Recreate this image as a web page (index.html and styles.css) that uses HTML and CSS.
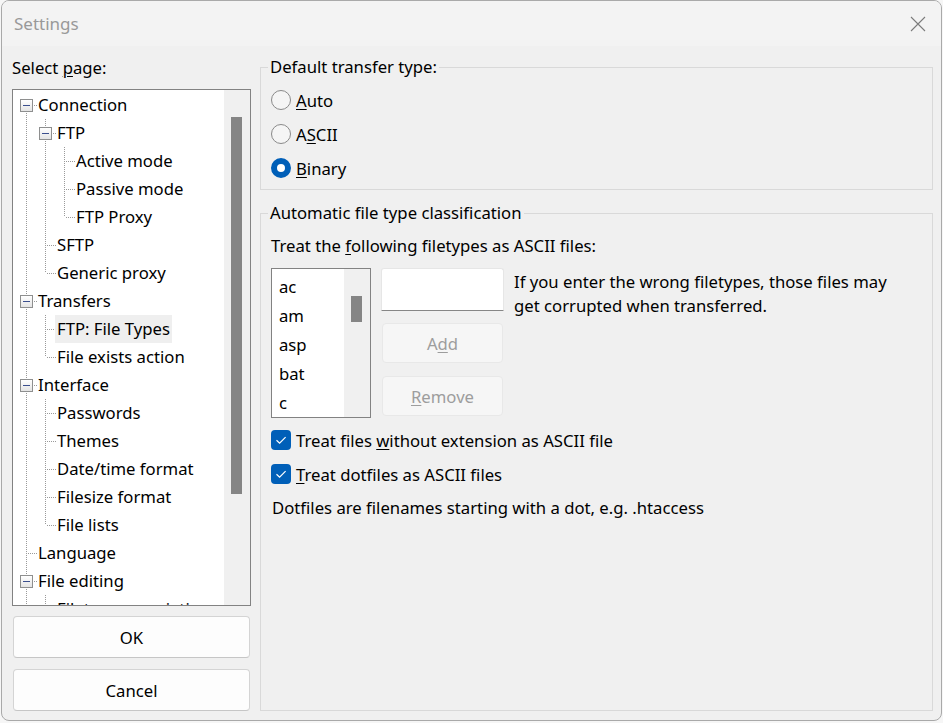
FILE: index.html
```html
<!DOCTYPE html>
<html lang="en">
<head>
<meta charset="utf-8">
<title>Settings</title>
<link rel="stylesheet" href="styles.css">
</head>
<body>
<div class="window">
  <div class="titlebar">
    <span class="title">Settings</span>
    <svg class="close" width="16" height="16" viewBox="0 0 16 16"><path d="M1 1 L15 15 M15 1 L1 15" stroke="#7c7c7c" stroke-width="1.1" fill="none"/></svg>
  </div>
  <div class="content">
    <div class="left">
      <div class="label">Select <u>p</u>age:</div>
      <div class="tree">
        <div class="tree-items">
          <div class="row"><span class="cell box-first"><span class="box"></span></span><span class="text">Connection</span></div>
          <div class="row"><span class="cell pipe"></span><span class="cell box-mid"><span class="box"></span></span><span class="text">FTP</span></div>
          <div class="row"><span class="cell pipe"></span><span class="cell pipe"></span><span class="cell tee"></span><span class="text">Active mode</span></div>
          <div class="row"><span class="cell pipe"></span><span class="cell pipe"></span><span class="cell tee"></span><span class="text">Passive mode</span></div>
          <div class="row"><span class="cell pipe"></span><span class="cell pipe"></span><span class="cell ell"></span><span class="text">FTP Proxy</span></div>
          <div class="row"><span class="cell pipe"></span><span class="cell tee"></span><span class="text">SFTP</span></div>
          <div class="row"><span class="cell pipe"></span><span class="cell ell"></span><span class="text">Generic proxy</span></div>
          <div class="row"><span class="cell box-mid"><span class="box"></span></span><span class="text">Transfers</span></div>
          <div class="row"><span class="cell pipe"></span><span class="cell tee"></span><span class="text selected">FTP: File Types</span></div>
          <div class="row"><span class="cell pipe"></span><span class="cell ell"></span><span class="text">File exists action</span></div>
          <div class="row"><span class="cell box-mid"><span class="box"></span></span><span class="text">Interface</span></div>
          <div class="row"><span class="cell pipe"></span><span class="cell tee"></span><span class="text">Passwords</span></div>
          <div class="row"><span class="cell pipe"></span><span class="cell tee"></span><span class="text">Themes</span></div>
          <div class="row"><span class="cell pipe"></span><span class="cell tee"></span><span class="text">Date/time format</span></div>
          <div class="row"><span class="cell pipe"></span><span class="cell tee"></span><span class="text">Filesize format</span></div>
          <div class="row"><span class="cell pipe"></span><span class="cell ell"></span><span class="text">File lists</span></div>
          <div class="row"><span class="cell tee"></span><span class="text">Language</span></div>
          <div class="row"><span class="cell box-mid"><span class="box"></span></span><span class="text">File editing</span></div>
          <div class="row"><span class="cell pipe"></span><span class="cell tee"></span><span class="text">Filetype associations</span></div>
        </div>
        <div class="vscroll tree-scroll"><div class="thumb"></div></div>
      </div>
      <button class="btn main-btn">OK</button>
      <button class="btn main-btn cancel">Cancel</button>
    </div>

    <div class="right">
      <fieldset class="group g1">
        <legend>Default transfer type:</legend>
        <div class="opt-row"><span class="radio"></span><span><u>A</u>uto</span></div>
        <div class="opt-row"><span class="radio"></span><span>A<u>S</u>CII</span></div>
        <div class="opt-row"><span class="radio checked"></span><span><u>B</u>inary</span></div>
      </fieldset>
      <fieldset class="group g2">
        <legend>Automatic file type classification</legend>
        <div class="line">Treat the <u>f</u>ollowing filetypes as ASCII files:</div>
        <div class="types">
          <div class="listbox">
            <div class="list-items">
              <div class="item">ac</div>
              <div class="item">am</div>
              <div class="item">asp</div>
              <div class="item">bat</div>
              <div class="item">c</div>
            </div>
            <div class="vscroll list-scroll"><div class="thumb"></div></div>
          </div>
          <div class="editcol">
            <div class="input"></div>
            <button class="btn disabled add">A<u>d</u>d</button>
            <button class="btn disabled remove"><u>R</u>emove</button>
          </div>
          <div class="help">If you enter the wrong filetypes, those files may<br>get corrupted when transferred.</div>
        </div>
        <div class="opt-row check-first"><span class="check"><svg width="20" height="20" viewBox="0 0 20 20"><path d="M5.5 10.2 L8.6 13.2 L14.6 7.2" stroke="#fff" stroke-width="1.2" fill="none"/></svg></span><span>Treat files <u>w</u>ithout extension as ASCII file</span></div>
        <div class="opt-row"><span class="check"><svg width="20" height="20" viewBox="0 0 20 20"><path d="M5.5 10.2 L8.6 13.2 L14.6 7.2" stroke="#fff" stroke-width="1.2" fill="none"/></svg></span><span><u>T</u>reat dotfiles as ASCII files</span></div>
        <div class="note">Dotfiles are filenames starting with a dot, e.g. .htaccess</div>
      </fieldset>
    </div>
  </div>
</div>
</body>
</html>
```

FILE: styles.css
```css
html, body {
  margin: 0;
  padding: 0;
  background: #f6f6f6;
}
body {
  font-family: "Noto Sans", "Open Sans", sans-serif;
  font-size: 16.7px;
  color: #000;
}
u {
  text-decoration: underline;
  text-underline-offset: 2px;
  text-decoration-thickness: 1px;
}
.window {
  width: 939px;
  height: 719px;
  margin-left: 1px;
  border: 1px solid #a9a9a9;
  border-radius: 8px;
  background: #f0f0f0;
  display: flex;
  flex-direction: column;
  overflow: hidden;
}
.titlebar {
  height: 45px;
  flex: none;
  background: #f3f3f3;
  display: flex;
  align-items: center;
  justify-content: space-between;
  padding: 0 15px 0 12px;
}
.title {
  color: #999;
  font-size: 17px;
}
.close { display: block; }

.content {
  flex: 1;
  display: grid;
  grid-template-columns: 239px 673px;
  column-gap: 9px;
  padding: 12px 0 9px 10px;
  min-height: 0;
}
.left {
  display: flex;
  flex-direction: column;
  min-height: 0;
}
.label {
  line-height: 20px;
  height: 20px;
}
.tree {
  margin-top: 11px;
  height: 517px;
  box-sizing: border-box;
  border: 1px solid #828282;
  background: #fff;
  display: flex;
  overflow: hidden;
}
.tree-items {
  flex: 1;
  padding: 1px 0 0 7px;
  overflow: hidden;
}
.row {
  display: flex;
  height: 28px;
  align-items: stretch;
  white-space: nowrap;
}
.cell {
  --dot: #9a9a9a;
  width: 19px;
  flex: none;
  display: flex;
  align-items: flex-start;
}
.pipe {
  background: repeating-linear-gradient(to bottom, var(--dot) 0 1px, transparent 1px 2px) 6px 0 / 1px 100% no-repeat;
}
.tee {
  background:
    repeating-linear-gradient(to bottom, var(--dot) 0 1px, transparent 1px 2px) 6px 0 / 1px 100% no-repeat,
    repeating-linear-gradient(to right, var(--dot) 0 1px, transparent 1px 2px) 8px 14px / 10px 1px no-repeat;
}
.ell {
  background:
    repeating-linear-gradient(to bottom, var(--dot) 0 1px, transparent 1px 2px) 6px 0 / 1px 14px no-repeat,
    repeating-linear-gradient(to right, var(--dot) 0 1px, transparent 1px 2px) 8px 14px / 10px 1px no-repeat;
}
.box-first {
  background:
    repeating-linear-gradient(to bottom, var(--dot) 0 1px, transparent 1px 2px) 6px 20px / 1px 8px no-repeat,
    repeating-linear-gradient(to right, var(--dot) 0 1px, transparent 1px 2px) 14px 14px / 4px 1px no-repeat;
}
.box-mid {
  background:
    repeating-linear-gradient(to bottom, var(--dot) 0 1px, transparent 1px 2px) 6px 0 / 1px 100% no-repeat,
    repeating-linear-gradient(to right, var(--dot) 0 1px, transparent 1px 2px) 14px 14px / 4px 1px no-repeat;
}
.box {
  width: 13px;
  height: 13px;
  box-sizing: border-box;
  margin-top: 8px;
  border: 1px solid #8e8f8f;
  background:
    linear-gradient(#3b4f8e, #3b4f8e) 2px 5px / 7px 1px no-repeat,
    linear-gradient(#ffffff, #e4e4e4);
}
.text {
  margin-left: -3px;
  padding: 0 2px;
  line-height: 28px;
}
.text.selected {
  background: #efefef;
}
.vscroll {
  flex: none;
  width: 26px;
  background: #f0f0f0;
  box-sizing: border-box;
  padding-left: 7px;
}
.vscroll .thumb {
  width: 11px;
  background: #858585;
}
.tree-scroll { padding-top: 27px; }
.tree-scroll .thumb { height: 377px; }

.btn {
  font: inherit;
  color: #000;
  box-sizing: border-box;
  background: #fdfdfd;
  border: 1px solid #d4d4d4;
  border-bottom-color: #c6c6c6;
  border-radius: 4px;
  padding: 0;
}
.main-btn {
  height: 42px;
  width: 237px;
  margin: 10px 0 0 1px;
  flex: none;
}
.main-btn.cancel { margin-top: 11px; }

.right {
  display: flex;
  flex-direction: column;
  min-height: 0;
  margin-top: -1px;
}
.group {
  margin: 0;
  border: 1px solid #d9d9d9;
  padding: 6px 10px 4px 10px;
  min-inline-size: 0;
}
.group legend {
  margin-left: -3px;
  padding: 0 2px;
  line-height: 20px;
}
.g2 {
  margin-top: 13px;
  flex: 1;
  padding-top: 13px;
}
.opt-row {
  height: 34px;
  display: flex;
  align-items: center;
  gap: 5px;
}
.radio {
  width: 20px;
  height: 20px;
  box-sizing: border-box;
  border-radius: 50%;
  border: 1px solid #8a8a8a;
  background: #f5f5f5;
  flex: none;
}
.radio.checked {
  border: 6px solid #005fb8;
  background: #fff;
}
.line {
  line-height: 20px;
}
.types {
  margin-top: 12px;
  display: flex;
  align-items: flex-start;
  height: 150px;
}
.listbox {
  width: 100px;
  height: 150px;
  box-sizing: border-box;
  border: 1px solid #828282;
  background: #fff;
  display: flex;
}
.list-items {
  flex: 1;
  padding: 3px 0 0 7px;
  overflow: hidden;
}
.item {
  line-height: 29px;
  height: 29px;
}
.list-scroll { padding-top: 27px; }
.list-scroll .thumb { height: 26px; }
.editcol {
  width: 123px;
  margin-left: 10px;
  display: flex;
  flex-direction: column;
  flex: none;
}
.input {
  height: 43px;
  box-sizing: border-box;
  background: #fff;
  border: 1px solid #e6e6e6;
  border-bottom: 1px solid #868686;
  border-radius: 3px 3px 0 0;
}
.btn.disabled {
  background: #f6f6f6;
  border: 1px solid #e8e8e8;
  color: #9d9d9d;
  height: 40px;
  margin: 12px 1px 0 1px;
}
.btn.disabled.remove { margin-top: 13px; }
.help {
  margin-left: 10px;
  padding-top: 2px;
  line-height: 24px;
  white-space: nowrap;
}
.check-first { margin-top: 5px; }
.check {
  width: 20px;
  height: 20px;
  border-radius: 4px;
  background: #005fb8;
  flex: none;
  display: flex;
}
.note {
  height: 34px;
  line-height: 34px;
  margin-left: 1px;
}
```
